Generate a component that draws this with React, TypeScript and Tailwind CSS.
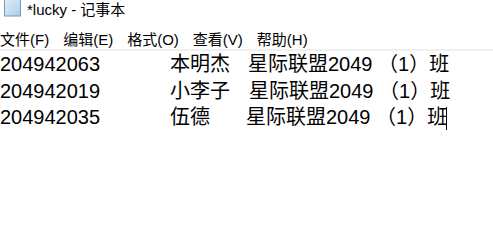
import React from 'react';

const rows = [
  { id: '204942063', name: '本明杰', nameW: 'w-[78px]' },
  { id: '204942019', name: '小李子', nameW: 'w-[79px]' },
  { id: '204942035', name: '伍德', nameW: 'w-[76px]' },
];

const menus = ['文件(F)', '编辑(E)', '格式(O)', '查看(V)', '帮助(H)'];

function NotepadIcon() {
  return (
    <svg width="20" height="17" viewBox="0 0 20 17" className="block">
      <defs>
        <linearGradient id="pad" x1="0" y1="0" x2="1" y2="1">
          <stop offset="0" stopColor="#e4f1fb" />
          <stop offset="1" stopColor="#a9cde8" />
        </linearGradient>
      </defs>
      <rect x="1.5" y="-2" width="16" height="18" fill="url(#pad)" stroke="#6f9cc3" />
      <line x1="4" y1="4" x2="15" y2="4" stroke="#c7dced" />
      <line x1="4" y1="7" x2="15" y2="7" stroke="#c7dced" />
      <line x1="4" y1="10" x2="15" y2="10" stroke="#c7dced" />
      <line x1="4" y1="13" x2="13" y2="13" stroke="#c7dced" />
    </svg>
  );
}

export default function App() {
  return (
    <div className="h-[223px] w-[493px] overflow-hidden bg-white text-black font-['Liberation_Sans','Noto_Sans_CJK_SC',sans-serif]">
      {/* title bar */}
      <div className="flex h-[24px] items-start gap-[4px] pl-[3px]">
        <NotepadIcon />
        <span className="mt-[1px] text-[15px] leading-[18px]">*lucky - 记事本</span>
      </div>

      {/* menu bar */}
      <div className="flex h-[27px] items-start gap-[14px] border-b-2 border-[#f0f0f0] pt-[7px] text-[15px] leading-[18px]">
        {menus.map((m) => (
          <span key={m}>{m}</span>
        ))}
      </div>

      {/* edit area */}
      <div className="text-[20px] leading-[26.5px]">
        {rows.map((r, i) => (
          <div key={r.id} className="flex whitespace-pre">
            <span className="w-[170px] shrink-0">{r.id}</span>
            <span className={`${r.nameW} shrink-0`}>{r.name}</span>
            <span>
              星际联盟2049 （1）班
              {i === 2 && (
                <span className="ml-[-1px] inline-block h-[23px] w-px translate-y-[3px] bg-black align-top" />
              )}
            </span>
          </div>
        ))}
      </div>
    </div>
  );
}
